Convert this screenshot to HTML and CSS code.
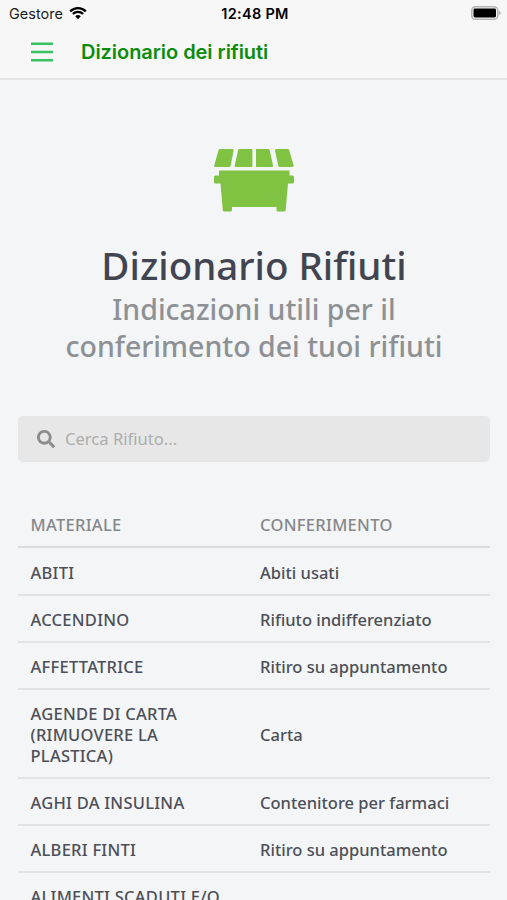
FILE: index.html
```
<!DOCTYPE html>
<html lang="it">

<head>
    <meta charset="utf-8">
    <meta name="viewport" content="width=device-width, initial-scale=1.0">
    <title>Dizionario dei rifiuti</title>
    <link rel="stylesheet" href="styles.css">
</head>

<body>

    <header>
        <div class="status">
            <div class="carrier">
                <span>Gestore</span>
                <svg class="wifi" viewBox="0 0 18 14">
                    <path d="M1.2 5.3a11.2 11.2 0 0 1 15.6 0" />
                    <path d="M3.9 8a7.3 7.3 0 0 1 10.2 0" />
                    <path class="dot" d="M6.2 10.3a4 4 0 0 1 5.6 0L9 13.2z" />
                </svg>
            </div>
            <span class="time">12:48 PM</span>
            <svg class="battery" viewBox="0 0 30 14">
                <rect class="shell" x=".75" y=".75" width="26" height="12.5" rx="3.6" />
                <rect x="2.5" y="2.5" width="22.500" height="9" rx="1.4" />
                <path class="tip" d="M27.800 4.800c2.400.600 2.400 3.800 0 4.400z" />
            </svg>
        </div>
        <nav>
            <svg class="menu" viewBox="0 0 22 20">
                <path d="M0 1.800h22M0 10h22M0 18.200h22" />
            </svg>
            <span class="nav-title">Dizionario dei rifiuti</span>
        </nav>
    </header>

    <main>
        <svg class="bin" viewBox="0 0 80 63">
            <path d="M4.500 1.200Q4.900 0 6.200 0H18.500q1.400 0 1.100 1.400L16.700 16.500q-.3 1.500-1.800 1.500H1.500Q-.2 18 .3 16.300z" />
            <path d="M24 1.400Q24.300 0 25.700 0h11.500q1.200 0 1.200 1.200V18H22q-1.600 0-1.300-1.500z" />
            <path d="M42 0H54q1.500 0 1.800 1.500L59 16.500q.3 1.500-1.200 1.500H42z" />
            <path d="M61 1.500Q60.800 0 62.300 0H73.500q1.300 0 1.700 1.200L79.600 16.300Q80 18 78.400 18H66q-1.500 0-1.800-1.500z" />
            <path d="M5 22.300Q5 21.500 5.800 21.500H75.500V26.500H78.500Q80 26.500 80 28V33Q80 34.500 78.500 34.500H74L71.700 61Q71.500 62.600 70 62.600H64Q62.500 62.600 62.500 61V58H18V61Q18 62.600 16.500 62.600H10.500Q9 62.600 8.800 61L6.500 34.500H1.500Q0 34.500 0 33V28Q0 26.500 1.500 26.500H5z" />
        </svg>

        <h1>Dizionario Rifiuti</h1>
        <h2>Indicazioni utili per il<br>conferimento dei tuoi rifiuti</h2>

        <div class="search">
            <svg viewBox="0 0 512 512">
                <path d="M505 442.700L405.300 343c-4.500-4.500-10.600-7-17-7H372c27.600-35.300 44-79.700 44-128C416 93.100 322.900 0 208 0S0 93.100 0 208s93.100 208 208 208c48.300 0 92.700-16.400 128-44v16.300c0 6.400 2.500 12.500 7 17l99.700 99.700c9.400 9.400 24.600 9.400 33.900 0l28.300-28.300c9.400-9.400 9.400-24.600.1-34zM208 336c-70.700 0-128-57.200-128-128 0-70.700 57.200-128 128-128 70.700 0 128 57.200 128 128 0 70.700-57.200 128-128 128z" />
            </svg>
            <input type="text" placeholder="Cerca Rifiuto...">
        </div>

        <table>
            <thead>
                <tr>
                    <th>MATERIALE</th>
                    <th>CONFERIMENTO</th>
                </tr>
            </thead>
            <tbody>
                <tr>
                    <td>ABITI</td>
                    <td>Abiti usati</td>
                </tr>
                <tr>
                    <td>ACCENDINO</td>
                    <td>Rifiuto indifferenziato</td>
                </tr>
                <tr>
                    <td>AFFETTATRICE</td>
                    <td>Ritiro su appuntamento</td>
                </tr>
                <tr>
                    <td>AGENDE DI CARTA<br>(RIMUOVERE LA<br>PLASTICA)</td>
                    <td>Carta</td>
                </tr>
                <tr>
                    <td>AGHI DA INSULINA</td>
                    <td>Contenitore per farmaci</td>
                </tr>
                <tr>
                    <td>ALBERI FINTI</td>
                    <td>Ritiro su appuntamento</td>
                </tr>
                <tr>
                    <td>ALIMENTI SCADUTI E/O</td>
                    <td></td>
                </tr>
            </tbody>
        </table>
    </main>

</body>

</html>
```
FILE: styles.css
```
* {
    box-sizing: border-box;
}

body {
    margin: 0;
    height: 900px;
    overflow: hidden;
    background-color: #f3f5f7;
    font-family: "Noto Sans", "Open Sans", sans-serif;
    color: #4d4f57;
}

header {
    height: 80px;
    background-color: #f7f7f7;
    border-bottom: 2px solid #e4e5e6;
    font-family: Inter, sans-serif;
}

.status {
    display: grid;
    grid-template-columns: 1fr auto 1fr;
    align-items: center;
    height: 27px;
    padding: 0 6px 0 9px;
    font-size: 14.5px;
    color: #1c1c1c;
}

.carrier {
    display: flex;
    align-items: center;
    gap: 6px;
}

.wifi {
    width: 18px;
    height: 14px;
    margin-top: -2px;
    fill: none;
    stroke: #000;
    stroke-width: 2.4;
}

.wifi .dot {
    fill: #000;
    stroke: none;
}

.time {
    font-weight: 600;
    letter-spacing: .3px;
    color: #000;
}

.battery {
    width: 30px;
    height: 14px;
    margin-top: -1px;
    justify-self: end;
}

.battery .shell {
    fill: none;
    stroke: #b4b4b4;
    stroke-width: 1.5;
}

.battery .tip {
    fill: #b4b4b4;
}

nav {
    display: flex;
    align-items: center;
    gap: 28px;
    height: 49px;
    padding-left: 31px;
}

.menu {
    width: 22px;
    height: 20px;
    stroke: #38c263;
    stroke-width: 2.4;
}

.nav-title {
    font-size: 20px;
    font-weight: 600;
    letter-spacing: -.05px;
    color: #0c8c0c;
}

main {
    display: flex;
    flex-direction: column;
    padding: 69px 17px 0 18px;
}

.bin {
    width: 80px;
    height: 63px;
    align-self: center;
    fill: #80c342;
}

h1 {
    margin: 27px 0 0;
    font-size: 38.5px;
    font-weight: 550;
    line-height: 52px;
    text-align: center;
    color: #42454f;
}

h2 {
    margin: 0;
    font-size: 28.5px;
    font-weight: 500;
    line-height: 37px;
    text-align: center;
    color: #8e9194;
}

.search {
    display: flex;
    align-items: center;
    gap: 10px;
    height: 46px;
    margin-top: 51px;
    padding: 0 19px;
    border-radius: 5px;
    background-color: #e7e7e7;
}

.search svg {
    width: 18px;
    height: 18px;
    fill: #8c8c8c;
}

.search input {
    flex: 1;
    padding: 0 0 1px;
    border: 0;
    outline: 0;
    background: none;
    font: 16.6px "Noto Sans", sans-serif;
}

.search input::placeholder {
    color: #adadad;
}

table {
    width: 472px;
    margin-top: 39px;
    border-collapse: separate;
    border-spacing: 0;
    table-layout: fixed;
    font-size: 16.5px;
    font-weight: 500;
    line-height: 21px;
}

th,
td {
    height: 47px;
    padding: 13px 0 11px 12.5px;
    border-bottom: 2px solid #e0e2e4;
    font-weight: 500;
    text-align: left;
    vertical-align: middle;
    white-space: nowrap;
}

th {
    border-bottom: 2px solid #d9dbdd;
    letter-spacing: .3px;
    color: #85878a;
}

th:first-child {
    width: 229.5px;
}

tbody tr:first-child td {
    height: 48px;
}

td:first-child {
    letter-spacing: .25px;
}
```
